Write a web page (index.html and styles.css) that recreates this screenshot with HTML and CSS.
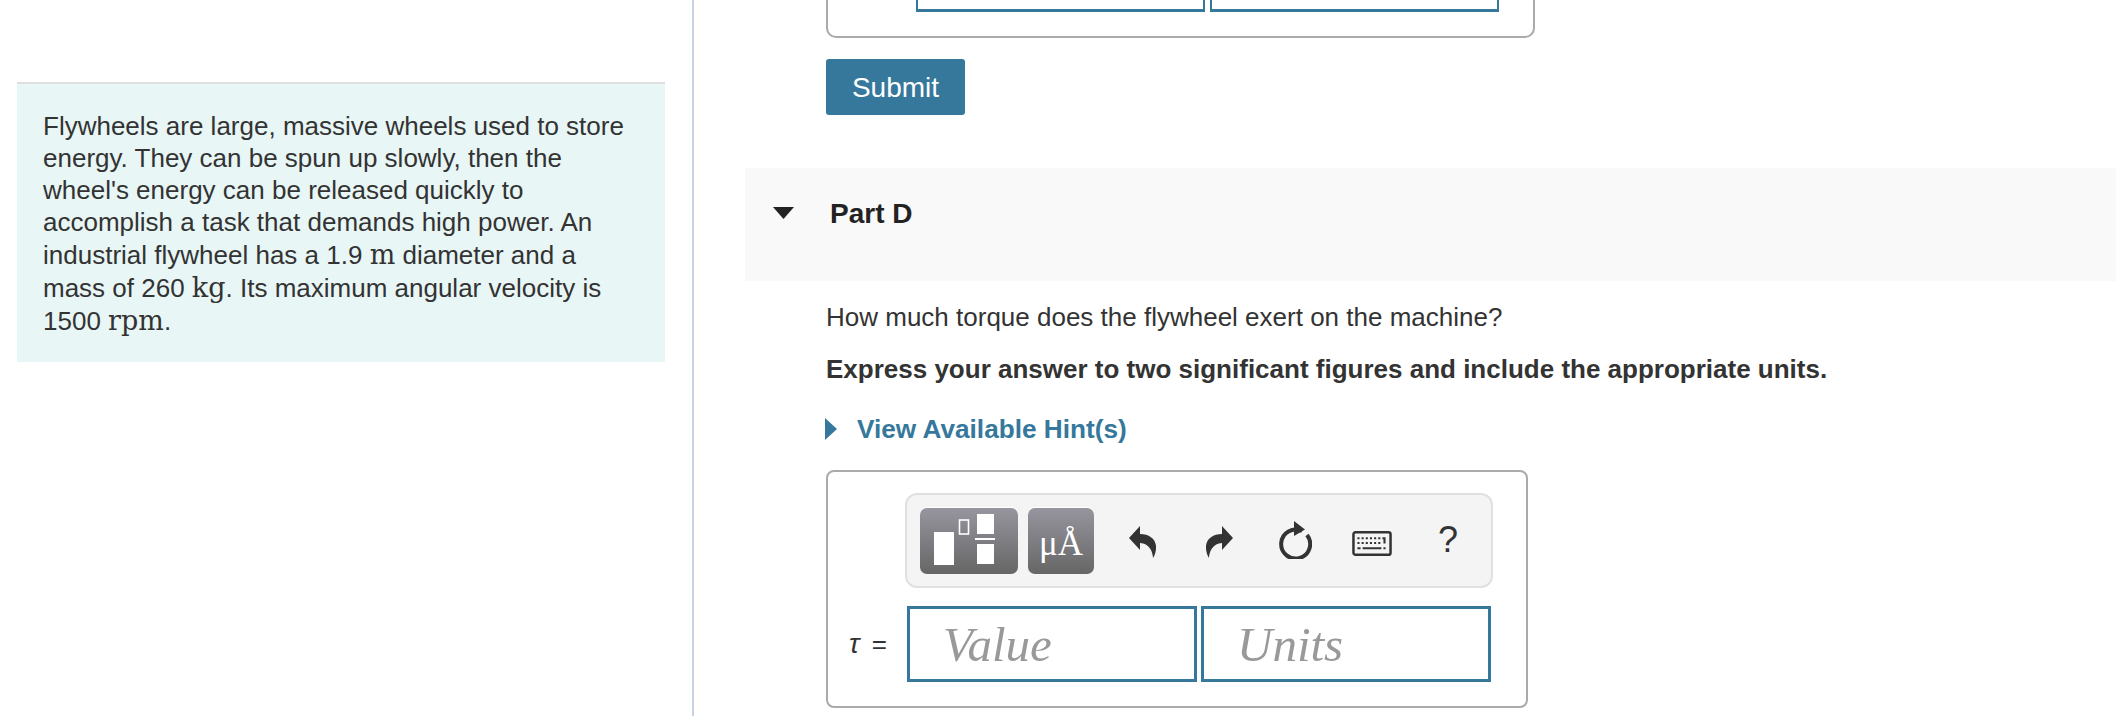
FILE: index.html
```html
<!DOCTYPE html>
<html lang="en">
<head>
<meta charset="utf-8">
<title>Part D</title>
<link rel="stylesheet" href="styles.css">
</head>
<body>
<div class="page">
  <aside class="side">
    <div class="intro">
      <p class="intro-text">Flywheels are large, massive wheels used to store energy. They can be spun up slowly, then the wheel's energy can be released quickly to accomplish a task that demands high power. An industrial flywheel has a 1.9 <span class="math">m</span> diameter and a mass of 260 <span class="math">kg</span>. Its maximum angular velocity is 1500 <span class="math">rpm</span>.</p>
    </div>
  </aside>
  <main class="main">
    <div class="indent">
      <div class="prev-card">
        <div class="prev-inputs"><div class="prev-input"></div><div class="prev-input"></div></div>
      </div>
      <button class="submit">Submit</button>
    </div>
    <div class="part-head">
      <svg class="part-arrow" viewBox="0 0 21 12" width="21" height="12"><path d="M0 0H21L10.5 12Z"/></svg>
      <h2 class="part-title">Part D</h2>
    </div>
    <div class="indent">
      <p class="question">How much torque does the flywheel exert on the machine?</p>
      <p class="instruction">Express your answer to two significant figures and include the appropriate units.</p>
      <div class="hint">
        <svg class="hint-arrow" viewBox="0 0 12 22" width="12" height="22"><path d="M0 0L12 11L0 22Z"/></svg>
        <span>View Available Hint(s)</span>
      </div>
      <div class="answer-card">
        <div class="toolbar">
          <div class="tool tool-wide">
            <svg viewBox="0 0 98 66" width="98" height="66">
              <rect x="14" y="24" width="20" height="33" fill="#fff"/>
              <rect x="39.5" y="12" width="9" height="14" fill="none" stroke="#fff" stroke-width="1.6"/>
              <rect x="57" y="6" width="17" height="20" fill="#fff"/>
              <rect x="55" y="30" width="20" height="2" fill="#fff"/>
              <rect x="57" y="36" width="17" height="20" fill="#fff"/>
            </svg>
          </div>
          <div class="tool tool-unit">μÅ</div>
          <svg class="icon icon-undo" viewBox="0 0 27 32" width="27" height="32"><path d="M0 12L11 0V8C21 8 28 14 27 23C26.500 27 25.500 30 24 32C24 26 20 17 11 17V24Z"/></svg>
          <svg class="icon icon-redo" viewBox="0 0 27 32" width="27" height="32"><path d="M27 12L16 0V8C6 8 -1 14 0 23C.5 27 1.500 30 3 32C3 26 7 17 16 17V24Z"/></svg>
          <svg class="icon icon-reset" viewBox="0 0 34 38" width="34" height="38"><path d="M24 10A14.500 14.500 0 1 0 29 14" fill="none" stroke="#333" stroke-width="4"/><path d="M16 0L27 8.500L16 15Z"/></svg>
          <svg class="icon icon-keys" viewBox="0 0 38 24" width="40" height="25">
            <rect x="1.200" y="1.200" width="35.600" height="21.600" rx="2" fill="#f4f4f4" stroke="#333" stroke-width="2.400"/>
            <path d="M5 6h2v2H5zM9 6h2v2H9zM13 6h2v2h-2zM17 6h2v2h-2zM21 6h2v2h-2zM25 6h2v2h-2zM29 6h3v6h-2V8h-1zM5 10.500h2v2H5zM9 10.500h2v2H9zM13 10.500h2v2h-2zM17 10.500h2v2h-2zM21 10.500h2v2h-2zM25 10.500h2v2h-2zM5 15.500h3v2H5zM10 15.500h18v2H10zM30 15.500h2v2h-2z"/>
          </svg>
          <span class="help">?</span>
        </div>
        <div class="answer-row">
          <span class="symbol"><i class="tau">τ</i> =</span>
          <div class="field">Value</div>
          <div class="field">Units</div>
        </div>
      </div>
    </div>
  </main>
</div>
</body>
</html>
```

FILE: styles.css
```css
* { box-sizing: border-box; }
html, body { margin: 0; padding: 0; height: 100%; overflow: hidden; background: #fff; }
body { font-family: "Liberation Sans", Arial, sans-serif; color: #333; font-size: 26px; }
p, h2 { margin: 0; }
.page { display: flex; height: 716px; }
.side { width: 694px; flex: none; border-right: 2px solid #c6d3e3; padding: 82px 0 0 17px; }
.intro { width: 648px; height: 280px; background: #e8f6f6; border-top: 2px solid #dfdfdf; padding: 26px 26px 0; }
.intro-text { line-height: 32px; }
.math { font-family: "DejaVu Serif", serif; font-size: 27px; line-height: 33px; }
.main { flex: 1; min-width: 0; padding-left: 51px; }
.indent { padding-left: 81px; }
.prev-card { height: 38px; width: 709px; border: 2px solid #aaa; border-top: 0; border-radius: 0 0 10px 10px; padding-left: 88px; }
.prev-inputs { display: flex; gap: 5px; }
.prev-input { width: 289px; height: 12px; border: 3px solid #36789b; border-top: 0; border-left-width: 2px; border-right-width: 2px; }
.submit { display: block; width: 139px; height: 56px; margin-top: 21px; background: #36789b; color: #fff; border: 0; border-radius: 3px; font: 28px/58px "Liberation Sans", Arial, sans-serif; padding: 0; }
.part-head { display: flex; align-items: flex-start; height: 113px; margin-top: 53px; background: #f9f9f9; padding: 28px 0 0 28px; }
.part-arrow { fill: #222; margin-top: 11px; }
.part-title { font-size: 28px; font-weight: bold; color: #222; margin-left: 36px; line-height: 36px; }
.question { margin-top: 20px; line-height: 32px; }
.instruction { margin-top: 20px; line-height: 32px; font-weight: bold; }
.hint { display: flex; align-items: center; gap: 20px; margin-top: 28px; margin-left: -1px; height: 32px; color: #36789b; font-weight: bold; font-size: 26.200px; }
.hint-arrow { fill: #36789b; }
.answer-card { width: 702px; height: 238px; margin-top: 25px; border: 2px solid #aaa; border-radius: 8px; padding: 21px 0 0 77px; }
.toolbar { display: flex; align-items: center; width: 588px; height: 95px; background: #f4f4f4; border: 2px solid #e0e0e0; border-radius: 12px; padding-left: 13px; }
.tool { height: 66px; border-radius: 7px; background: linear-gradient(#97959e, #666); box-shadow: 0 -1px 0 #fff; flex: none; }
.tool-wide { width: 98px; }
.tool-wide svg { display: block; }
.tool-unit { width: 66px; margin-left: 10px; color: #fff; font: 35px/72px "Liberation Serif", serif; text-align: center; }
.icon { flex: none; fill: #333; }
.icon-undo { margin-left: 35px; margin-top: 2px; }
.icon-redo { margin-left: 50px; margin-top: 2px; }
.icon-reset { margin-left: 45px; margin-top: -2px; }
.icon-keys { margin-left: 40px; margin-top: 5px; }
.help { margin-left: 46px; font-size: 36px; color: #333; line-height: 40px; margin-top: -2px; }
.answer-row { display: flex; align-items: center; gap: 4px; margin-top: 18px; margin-left: -60px; }
.symbol { width: 57px; padding-left: 4px; white-space: nowrap; font-size: 26px; flex: none; margin-right: 1px; }
.tau { font-family: "Liberation Sans", sans-serif; font-size: 28px; margin-right: 5px; }
.field { width: 290px; height: 76px; border: 3px solid #36789b; padding-left: 33px; color: #999; font: italic 49px/72px "Liberation Serif", serif; }
```
